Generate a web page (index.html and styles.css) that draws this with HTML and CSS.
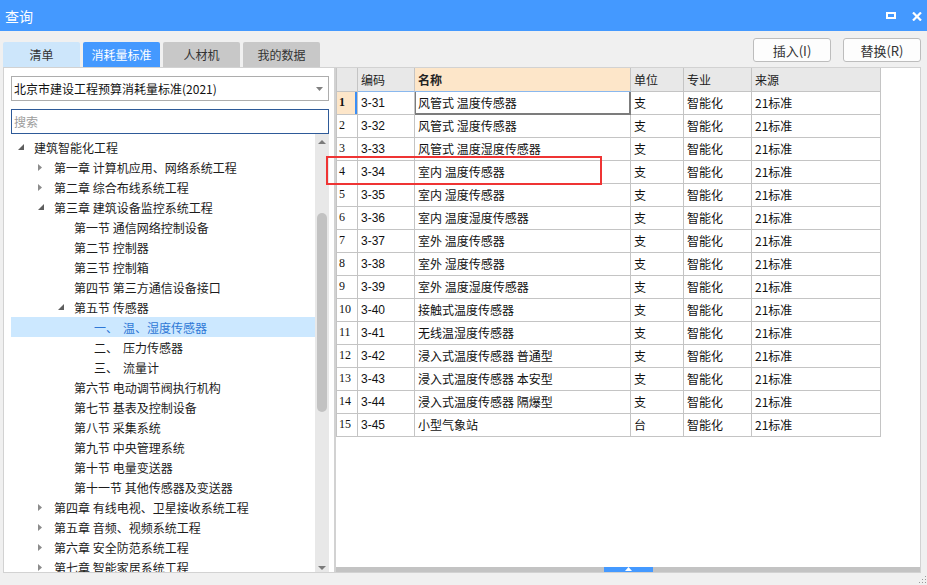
FILE: index.html
```html
<!DOCTYPE html>
<html lang="zh-CN">
<head>
<meta charset="utf-8">
<title>查询</title>
<link rel="stylesheet" href="styles.css">
</head>
<body>
<div class="window">
  <div class="titlebar">
    <span class="title">查询</span>
    <div class="win-btns">
      <span class="ic-restore"></span>
      <svg class="ic-close" width="10" height="9" viewBox="0 0 10 9"><path d="M1 0.5 L9 8.5 M9 0.5 L1 8.5" stroke="#fff" stroke-width="2.2" fill="none"/></svg>
    </div>
  </div>
  <div class="main">
    <div class="left">
      <div class="tabs">
        <div class="tab tab-light">清单</div>
        <div class="tab tab-active">消耗量标准</div>
        <div class="tab tab-gray">人材机</div>
        <div class="tab tab-gray">我的数据</div>
      </div>
      <div class="left-panel">
        <div class="select">
          <span>北京市建设工程预算消耗量标准(2021)</span>
          <svg class="caret" width="7" height="4" viewBox="0 0 7 4"><path d="M0 0 L7 0 L3.5 4 Z" fill="#808080"/></svg>
        </div>
        <div class="search">搜索</div>
        <div class="tree-wrap">
          <ul class="tree">
            <li class="node l0"><span class="exp"><svg width="6" height="6" viewBox="0 0 6 6"><path d="M6 0 L6 6 L0 6 Z" fill="#5e5e5e"/></svg></span>建筑智能化工程</li>
            <li class="node l1"><span class="exp"><svg width="4" height="7" viewBox="0 0 4 7"><path d="M0 0 L4 3.5 L0 7 Z" fill="#8c8c8c"/></svg></span>第一章 计算机应用、网络系统工程</li>
            <li class="node l1"><span class="exp"><svg width="4" height="7" viewBox="0 0 4 7"><path d="M0 0 L4 3.5 L0 7 Z" fill="#8c8c8c"/></svg></span>第二章 综合布线系统工程</li>
            <li class="node l1"><span class="exp"><svg width="6" height="6" viewBox="0 0 6 6"><path d="M6 0 L6 6 L0 6 Z" fill="#5e5e5e"/></svg></span>第三章 建筑设备监控系统工程</li>
            <li class="node l2"><span class="exp"></span>第一节 通信网络控制设备</li>
            <li class="node l2"><span class="exp"></span>第二节 控制器</li>
            <li class="node l2"><span class="exp"></span>第三节 控制箱</li>
            <li class="node l2"><span class="exp"></span>第四节 第三方通信设备接口</li>
            <li class="node l2"><span class="exp"><svg width="6" height="6" viewBox="0 0 6 6"><path d="M6 0 L6 6 L0 6 Z" fill="#5e5e5e"/></svg></span>第五节 传感器</li>
            <li class="node l3 sel"><span class="exp"></span><span class="num">一、</span>温、湿度传感器</li>
            <li class="node l3"><span class="exp"></span><span class="num">二、</span>压力传感器</li>
            <li class="node l3"><span class="exp"></span><span class="num">三、</span>流量计</li>
            <li class="node l2"><span class="exp"></span>第六节 电动调节阀执行机构</li>
            <li class="node l2"><span class="exp"></span>第七节 基表及控制设备</li>
            <li class="node l2"><span class="exp"></span>第八节 采集系统</li>
            <li class="node l2"><span class="exp"></span>第九节 中央管理系统</li>
            <li class="node l2"><span class="exp"></span>第十节 电量变送器</li>
            <li class="node l2"><span class="exp"></span>第十一节 其他传感器及变送器</li>
            <li class="node l1"><span class="exp"><svg width="4" height="7" viewBox="0 0 4 7"><path d="M0 0 L4 3.5 L0 7 Z" fill="#8c8c8c"/></svg></span>第四章 有线电视、卫星接收系统工程</li>
            <li class="node l1"><span class="exp"><svg width="4" height="7" viewBox="0 0 4 7"><path d="M0 0 L4 3.5 L0 7 Z" fill="#8c8c8c"/></svg></span>第五章 音频、视频系统工程</li>
            <li class="node l1"><span class="exp"><svg width="4" height="7" viewBox="0 0 4 7"><path d="M0 0 L4 3.5 L0 7 Z" fill="#8c8c8c"/></svg></span>第六章 安全防范系统工程</li>
            <li class="node l1"><span class="exp"><svg width="4" height="7" viewBox="0 0 4 7"><path d="M0 0 L4 3.5 L0 7 Z" fill="#8c8c8c"/></svg></span>第七章 智能家居系统工程</li>
          </ul>
          <div class="vscroll">
            <div class="vs-up"><svg width="8" height="4" viewBox="0 0 8 4"><path d="M0 4 L4 0 L8 4 Z" fill="#7a7a7a"/></svg></div>
            <div class="vs-thumb"></div>
            <div class="vs-down"><svg width="8" height="4" viewBox="0 0 8 4"><path d="M0 0 L8 0 L4 4 Z" fill="#7a7a7a"/></svg></div>
          </div>
        </div>
      </div>
    </div>
    <div class="right">
      <div class="toolbar">
        <button class="btn">插入(I)</button>
        <button class="btn">替换(R)</button>
      </div>
      <div class="right-panel">
        <div class="grid">
          <div class="gr head">
            <div class="gc"></div>
            <div class="gc hl">编码</div>
            <div class="gc hl sorted">名称</div>
            <div class="gc">单位</div>
            <div class="gc">专业</div>
            <div class="gc">来源</div>
          </div>
          <div class="gr cur">
            <div class="gc rn">1</div><div class="gc code">3-31</div><div class="gc focus">风管式 温度传感器</div><div class="gc">支</div><div class="gc">智能化</div><div class="gc">21标准</div>
          </div>
          <div class="gr"><div class="gc rn">2</div><div class="gc code">3-32</div><div class="gc">风管式 湿度传感器</div><div class="gc">支</div><div class="gc">智能化</div><div class="gc">21标准</div></div>
          <div class="gr"><div class="gc rn">3</div><div class="gc code">3-33</div><div class="gc">风管式 温度湿度传感器</div><div class="gc">支</div><div class="gc">智能化</div><div class="gc">21标准</div></div>
          <div class="gr"><div class="gc rn">4</div><div class="gc code">3-34</div><div class="gc">室内 温度传感器</div><div class="gc">支</div><div class="gc">智能化</div><div class="gc">21标准</div></div>
          <div class="gr"><div class="gc rn">5</div><div class="gc code">3-35</div><div class="gc">室内 湿度传感器</div><div class="gc">支</div><div class="gc">智能化</div><div class="gc">21标准</div></div>
          <div class="gr"><div class="gc rn">6</div><div class="gc code">3-36</div><div class="gc">室内 温度湿度传感器</div><div class="gc">支</div><div class="gc">智能化</div><div class="gc">21标准</div></div>
          <div class="gr"><div class="gc rn">7</div><div class="gc code">3-37</div><div class="gc">室外 温度传感器</div><div class="gc">支</div><div class="gc">智能化</div><div class="gc">21标准</div></div>
          <div class="gr"><div class="gc rn">8</div><div class="gc code">3-38</div><div class="gc">室外 湿度传感器</div><div class="gc">支</div><div class="gc">智能化</div><div class="gc">21标准</div></div>
          <div class="gr"><div class="gc rn">9</div><div class="gc code">3-39</div><div class="gc">室外 温度湿度传感器</div><div class="gc">支</div><div class="gc">智能化</div><div class="gc">21标准</div></div>
          <div class="gr"><div class="gc rn">10</div><div class="gc code">3-40</div><div class="gc">接触式温度传感器</div><div class="gc">支</div><div class="gc">智能化</div><div class="gc">21标准</div></div>
          <div class="gr"><div class="gc rn">11</div><div class="gc code">3-41</div><div class="gc">无线温湿度传感器</div><div class="gc">支</div><div class="gc">智能化</div><div class="gc">21标准</div></div>
          <div class="gr"><div class="gc rn">12</div><div class="gc code">3-42</div><div class="gc">浸入式温度传感器 普通型</div><div class="gc">支</div><div class="gc">智能化</div><div class="gc">21标准</div></div>
          <div class="gr"><div class="gc rn">13</div><div class="gc code">3-43</div><div class="gc">浸入式温度传感器 本安型</div><div class="gc">支</div><div class="gc">智能化</div><div class="gc">21标准</div></div>
          <div class="gr"><div class="gc rn">14</div><div class="gc code">3-44</div><div class="gc">浸入式温度传感器 隔爆型</div><div class="gc">支</div><div class="gc">智能化</div><div class="gc">21标准</div></div>
          <div class="gr"><div class="gc rn">15</div><div class="gc code">3-45</div><div class="gc">小型气象站</div><div class="gc">台</div><div class="gc">智能化</div><div class="gc">21标准</div></div>
        </div>
        <div class="hscroll">
          <div class="hs-handle"><svg width="7" height="4" viewBox="0 0 7 4"><path d="M0 4 L3.5 0 L7 4 Z" fill="#fff"/></svg></div>
        </div>
      </div>
    </div>
  </div>
  <div class="red-mark"></div>
  <svg class="grip" width="9" height="9" viewBox="0 0 9 9">
    <rect x="7" y="1" width="1" height="1" fill="#999"/>
    <rect x="4" y="4" width="1" height="1" fill="#999"/>
    <rect x="7" y="4" width="1" height="1" fill="#999"/>
    <rect x="1" y="7" width="1" height="1" fill="#999"/>
    <rect x="4" y="7" width="1" height="1" fill="#999"/>
    <rect x="7" y="7" width="1" height="1" fill="#999"/>
  </svg>
</div>
</body>
</html>
```

FILE: styles.css
```css
* { box-sizing: border-box; }
html, body { margin: 0; padding: 0; }
body {
  background: #f0f0f0;
  font-family: "Noto Sans CJK SC", "Microsoft YaHei", sans-serif;
  font-size: 12px;
  color: #222;
}
.window {
  position: relative;
  width: 927px;
  height: 585px;
  overflow: hidden;
  background: #f0f0f0;
}
.titlebar {
  height: 31px;
  background: #4499ff;
  display: flex;
  align-items: center;
  padding: 0 5px;
  color: #fff;
}
.title { font-size: 14px; line-height: 16px; }
.win-btns {
  margin-left: auto;
  display: flex;
  align-items: center;
  gap: 16px;
}
.ic-restore {
  display: block;
  width: 10px;
  height: 7px;
  border: 2px solid #fff;
  margin-top: -1px;
}
.ic-close { display: block; margin-top: 1px; }

.main {
  display: flex;
  height: 554px;
  padding-left: 3px;
}
.left {
  width: 332px;
  display: flex;
  flex-direction: column;
  padding-top: 11px;
}
.tabs {
  display: flex;
  gap: 3px;
  height: 25px;
}
.tab {
  width: 77px;
  display: flex;
  align-items: center;
  justify-content: center;
  border-radius: 2px 2px 0 0;
  color: #333;
  font-size: 12px;
}
.tab-light { background: #cde6fb; }
.tab-active { background: #4499ff; color: #fff; }
.tab-gray { background: #c8c8c8; }

.left-panel {
  height: 506px;
  border: 1px solid #d2d2d2;
  background: #fff;
  padding: 8px 5px 0 7px;
  display: flex;
  flex-direction: column;
}
.select {
  height: 25px;
  border: 1px solid #adadad;
  display: flex;
  align-items: center;
  padding-left: 2px;
  color: #111;
}
.caret { margin-left: auto; margin-right: 5px; }
.search {
  margin-top: 8px;
  height: 25px;
  border: 1px solid #2e5a98;
  color: #9c9c9c;
  padding-left: 2px;
  display: flex;
  align-items: center;
}
.tree-wrap {
  flex: 1;
  display: flex;
  min-height: 0;
}
.tree {
  flex: 1;
  list-style: none;
  margin: 0;
  padding: 3px 0 0;
  overflow: hidden;
}
.node {
  height: 20px;
  display: flex;
  align-items: center;
  white-space: nowrap;
  color: #1c1c1c;
}
.l1 { padding-left: 20px; }
.l2 { padding-left: 40px; }
.l3 { padding-left: 60px; }
.exp {
  width: 23px;
  flex: none;
  display: flex;
  align-items: center;
  padding-left: 7px;
}
.exp svg { display: block; }
.num { margin-right: 5px; }
.node.sel { background: #cce8ff; color: #2f78d6; }

.vscroll {
  width: 14px;
  flex: none;
  background: #e8e8e8;
  display: flex;
  flex-direction: column;
  align-items: center;
}
.vs-up {
  height: 16px;
  padding-top: 6px;
}
.vs-up svg, .vs-down svg { display: block; }
.vs-thumb {
  margin-top: 63px;
  width: 10px;
  height: 199px;
  border-radius: 5px;
  background: #c2c2c2;
}
.vs-down {
  margin-top: auto;
  height: 10px;
  padding-top: 4px;
}

.right {
  width: 586px;
  display: flex;
  flex-direction: column;
  padding-top: 7px;
}
.toolbar {
  height: 24px;
  display: flex;
  justify-content: flex-end;
  gap: 12px;
  margin-bottom: 5px;
}
.btn {
  width: 78px;
  height: 24px;
  border: 1px solid #bdbdbd;
  border-radius: 3px;
  background: #fdfdfd;
  font-family: inherit;
  font-size: 13px;
  color: #333;
  padding: 0;
}
.right-panel {
  height: 506px;
  border: 1px solid #d2d2d2;
  background: #fff;
  display: flex;
  flex-direction: column;
}
.grid {
  width: 545px;
  border-left: 1px solid #c4c4c4;
  color: #111;
}
.gr {
  display: grid;
  grid-template-columns: 21px 57px 216px 53px 68px 129px;
  height: 23px;
}
.gr.head { height: 24px; }
.head .gc { background: #e8e8e8; color: #222; }
.head .sorted { background: #fde6c9; font-weight: bold; }
.head .hl { border-bottom-color: #8ab8ee; }
.gc {
  border-right: 1px solid #c4c4c4;
  border-bottom: 1px solid #c4c4c4;
  padding-left: 3px;
  padding-bottom: 1px;
  display: flex;
  align-items: center;
  overflow: hidden;
  white-space: nowrap;
}
.rn {
  font-family: "Liberation Serif", serif;
  font-size: 12px;
  padding-left: 2px;
}
.code { font-family: "Liberation Sans", sans-serif; font-size: 12px; }
.cur .rn {
  background: #fde6c9;
  font-weight: bold;
  box-shadow: inset -2px 0 0 #3a8ef6;
}
.focus {
  border-right: 2px solid #7c7c7c;
  border-bottom: 2px solid #7c7c7c;
  box-shadow: inset 1px 0 0 #7c7c7c;
}

.hscroll {
  margin-top: auto;
  height: 5px;
  background: #c3c3c3;
  display: flex;
}
.hs-handle {
  margin-left: 268px;
  width: 49px;
  height: 5px;
  background: #4499ff;
  display: flex;
  align-items: flex-end;
  justify-content: center;
}
.hs-handle svg { display: block; margin-bottom: 1px; }

.red-mark {
  position: absolute;
  left: 326px;
  top: 156px;
  width: 276px;
  height: 29px;
  border: 2px solid #ef3434;
}
.grip {
  position: absolute;
  right: 0;
  bottom: 1px;
}
```
